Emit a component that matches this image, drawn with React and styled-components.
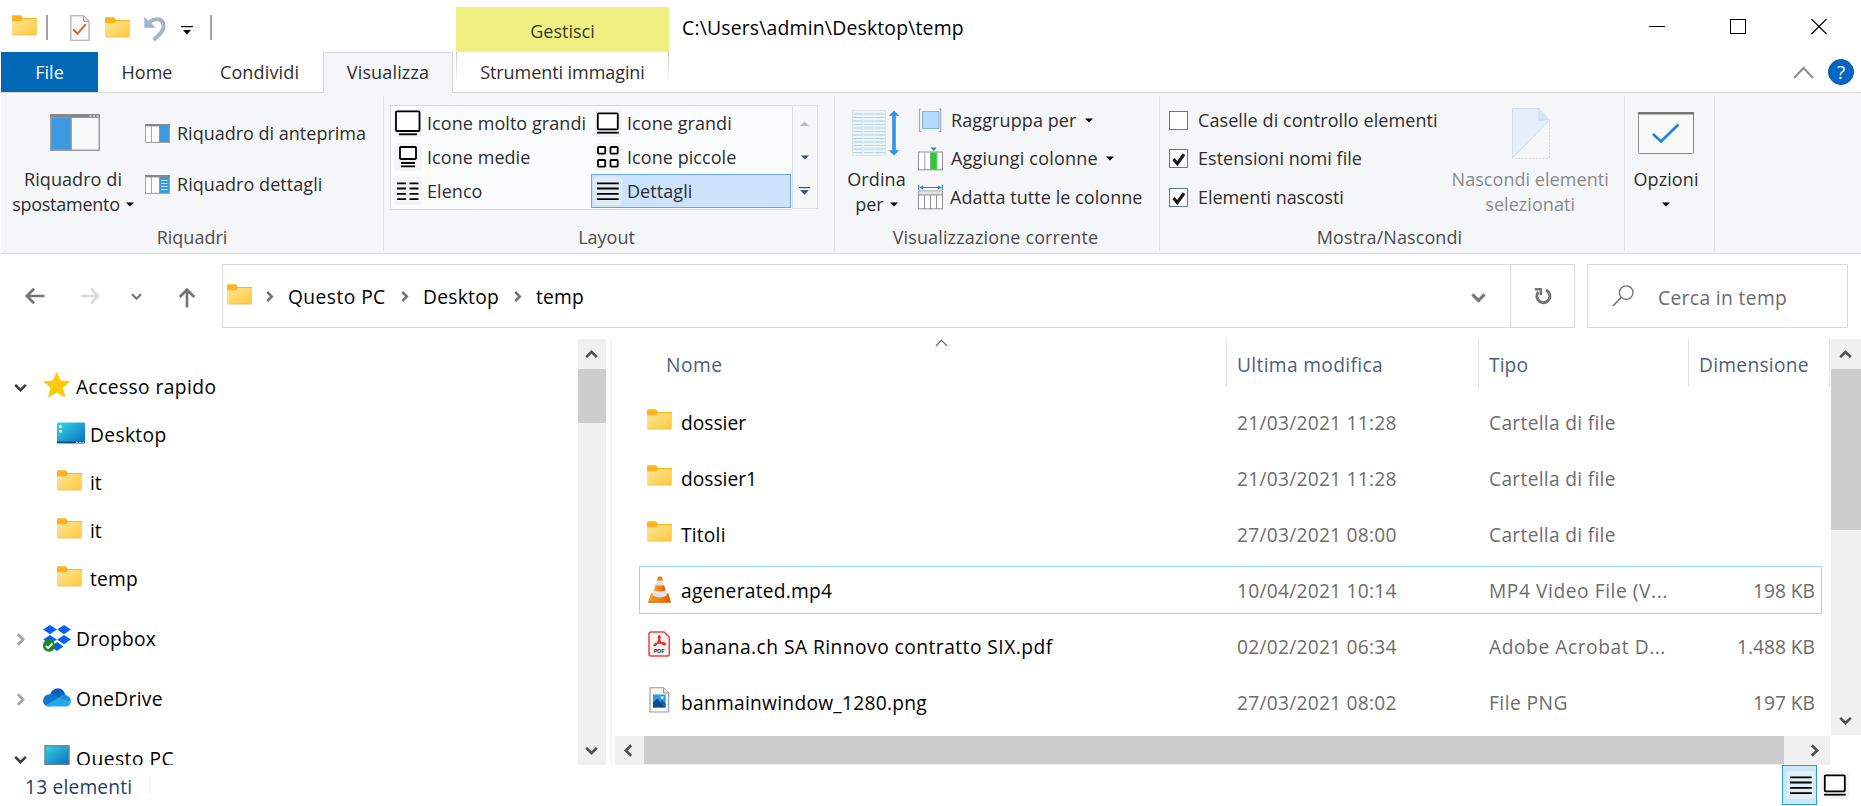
import React from "react";
import styled, { createGlobalStyle } from "styled-components";

const Global = createGlobalStyle`
  * { box-sizing: border-box; }
  body { margin: 0; background: #fff; }
  svg { display: block; flex: none; }
`;

const Window = styled.div`
  width: 1861px;
  height: 806px;
  overflow: hidden;
  display: flex;
  flex-direction: column;
  background: #fff;
  color: #000;
  font: 19.2px/24px "Open Sans", "Noto Sans", sans-serif;
  white-space: nowrap;
`;

/* ---------- title bar ---------- */
const TitleBar = styled.header`
  height: 52px;
  flex: none;
  display: flex;
  align-items: flex-start;
`;
const QuickAccess = styled.div`
  width: 456px;
  padding: 13px 0 0 12px;
  display: flex;
  align-items: flex-start;
`;
const QuickSlot = styled.div`
  width: ${(p) => p.$w}px;
  padding-top: ${(p) => p.$top || 0}px;
`;
const QuickRule = styled.div`
  width: 2px;
  height: 25px;
  margin-top: 2px;
  margin-right: ${(p) => p.$gap || 0}px;
  background: #a3a3a3;
`;
const ContextCaption = styled.div`
  width: 213px;
  height: 45px;
  margin-top: 7px;
  background: #f0f082;
  color: #3a3a2c;
  text-align: center;
  font-size: 18px;
  line-height: 48px;
`;
const WindowTitle = styled.div`
  margin-left: 13px;
  flex: 1;
  line-height: 56px;
  font-size: 19.4px;
  letter-spacing: 0.18px;
`;
const WindowButtons = styled.div`
  display: flex;
  gap: 65px;
  padding: 19px 34px 0 0;
`;

/* ---------- tab strip ---------- */
const TabStrip = styled.nav`
  height: 41px;
  flex: none;
  padding-left: 1px;
  display: flex;
  font-size: 18px;
  line-height: 41px;
  color: #2e2e2e;
  border-bottom: 1px solid #d9dadc;
`;
const Tab = styled.div`
  width: ${(p) => p.$w}px;
  text-align: center;
  letter-spacing: ${(p) => p.$ls || 0}px;
`;
const FileTab = styled(Tab)`
  background: #0069b5;
  color: #fff;
`;
const ActiveTab = styled(Tab)`
  height: 41px;
  background: #f5f6f7;
  border: 1px solid #d9dadc;
  border-bottom: 0;
  line-height: 39px;
`;
const ContextTab = styled(Tab)`
  height: 31px;
  margin-left: 3px;
  border: solid;
  border-width: 0 1px;
  border-image: linear-gradient(#c4c4c4, #fff) 1;
`;
const TabTools = styled.div`
  margin-left: auto;
  display: flex;
  gap: 14px;
  padding-right: 7px;
  height: 40px;
  align-items: center;
`;
const HelpBadge = styled.div`
  width: 26px;
  height: 26px;
  border-radius: 50%;
  background: #0066c6;
  border: 1px solid #0b55a0;
  color: #fff;
  text-align: center;
  font-size: 19px;
  line-height: 24px;
`;

/* ---------- ribbon ---------- */
const Ribbon = styled.section`
  height: 161px;
  flex: none;
  display: flex;
  margin-left: 1px;
  background: #f5f6f7;
  border-bottom: 1px solid #dadbdc;
  font-size: 18px;
  line-height: 25px;
  color: #2e2e2e;
`;
const Group = styled.div`
  width: ${(p) => p.$w}px;
  height: 160px;
  display: flex;
  flex-direction: column;
  border-right: 1px solid transparent;
  border-image: linear-gradient(transparent 4px, #e0e1e3 4px, #e0e1e3 157px, transparent 157px) 1;
`;
const GroupBody = styled.div`
  height: 132px;
  display: flex;
`;
const GroupLabel = styled.div`
  text-align: center;
  color: #4d4d4d;
  padding-right: ${(p) => p.$shift || 0}px;
  letter-spacing: ${(p) => p.$ls || 0}px;
`;
const BigButton = styled.div`
  width: ${(p) => p.$w}px;
  margin-left: ${(p) => p.$left || 0}px;
  padding-top: ${(p) => p.$top || 0}px;
  display: flex;
  flex-direction: column;
  align-items: center;
  color: ${(p) => (p.$off ? "#8a8a8a" : "inherit")};
`;
const BigIcon = styled.div`
  height: ${(p) => p.$h}px;
  margin-left: ${(p) => p.$dx || 0}px;
`;
const Line = styled.div`
  display: flex;
  align-items: center;
  justify-content: center;
  gap: 6px;
  height: 25px;
  letter-spacing: ${(p) => p.$ls || 0}px;
`;
const SmallList = styled.div`
  display: flex;
  flex-direction: column;
  padding: ${(p) => p.$pad};
  gap: ${(p) => p.$gap}px;
`;
const SmallButton = styled.div`
  display: flex;
  align-items: center;
  gap: ${(p) => p.$gap || 7}px;
  height: 28px;
  letter-spacing: ${(p) => p.$ls || 0}px;
`;
const CheckBox = styled.div`
  width: 19px;
  height: 19px;
  border: 1px solid #5a78a8;
  background: #fff;
`;

const Gallery = styled.div`
  margin: 12px 0 0 6px;
  height: 105px;
  display: flex;
`;
const GalleryGrid = styled.div`
  width: 402px;
  height: 105px;
  border: 1px solid #d9dadd;
  border-right: 0;
  background: #fbfcfd;
  display: grid;
  grid-template-columns: 200px 200px;
  grid-auto-rows: 34px;
`;
const GalleryItem = styled.div`
  display: flex;
  align-items: center;
  padding-left: ${(p) => (p.$on ? 2 : 3)}px;
  gap: 5px;
  border: ${(p) => (p.$on ? "1px solid #66a7e8" : "0")};
  background: ${(p) => (p.$on ? "#cde3fb" : "none")};
  letter-spacing: 0.06px;
`;
const IconPlate = styled.div`
  width: 28px;
  height: 28px;
  border-radius: 4px;
  background: ${(p) => p.$bg || "#f3f5f5"};
`;
const GalleryScroll = styled.div`
  width: 26px;
  height: 104px;
  border: 1px solid #dfe0e3;
  background: #f5f6f8;
  display: flex;
  flex-direction: column;
  align-items: center;
`;
const ScrollStep = styled.div`
  height: 34px;
  display: flex;
  align-items: center;
  padding-right: 1px;
`;

/* ---------- navigation row ---------- */
const NavRow = styled.div`
  height: 85px;
  flex: none;
  display: flex;
  padding-top: 10px;
`;
const NavButtons = styled.div`
  width: 222px;
  height: 64px;
  display: flex;
  align-items: center;
`;
const NavSlot = styled.div`
  width: ${(p) => p.$w}px;
  display: flex;
  justify-content: flex-end;
  padding-top: ${(p) => p.$top || 0}px;
`;
const AddressBar = styled.div`
  width: 1353px;
  height: 64px;
  border: 1px solid #d9d9d9;
  display: flex;
  align-items: center;
  padding-left: 4px;
`;
const Crumb = styled.div`
  width: ${(p) => p.$w}px;
  padding-top: 2px;
  letter-spacing: ${(p) => p.$ls || 0}px;
`;
const CrumbIcon = styled.div`
  width: 37px;
  padding-bottom: 4px;
`;
const CrumbArrow = styled.div`
  width: ${(p) => p.$w}px;
  padding-top: 1px;
`;
const AddressDrop = styled.div`
  margin-left: auto;
  padding-right: 24px;
  padding-top: 3px;
`;
const Refresh = styled.div`
  width: 64px;
  height: 62px;
  border-left: 1px solid #d9d9d9;
  display: flex;
  align-items: center;
  justify-content: center;
`;
const SearchBox = styled.div`
  width: 261px;
  height: 64px;
  margin-left: 12px;
  border: 1px solid #d9d9d9;
  display: flex;
  align-items: center;
  padding-left: 24px;
  gap: 24px;
  color: #6a6a6a;
`;
const SearchHint = styled.div`
  padding-top: 4px;
  letter-spacing: 0.38px;
`;

/* ---------- body ---------- */
const Body = styled.main`
  height: 426px;
  flex: none;
  display: flex;
`;
const Sidebar = styled.aside`
  width: 578px;
  height: 426px;
  overflow: hidden;
  padding-top: 24px;
`;
const TreeRow = styled.div`
  height: 48px;
  margin-top: ${(p) => p.$gap || 0}px;
  display: flex;
  align-items: center;
`;
const TreeToggle = styled.div`
  width: 43px;
  padding-left: 14px;
`;
const TreeIcon = styled.div`
  width: ${(p) => (p.$deep ? 47 : 33)}px;
  padding-left: ${(p) => (p.$deep ? 14 : 0)}px;
  padding-bottom: ${(p) => p.$up || 0}px;
`;
const TreeText = styled.div`
  letter-spacing: ${(p) => p.$ls || 0}px;
`;
const VScroll = styled.div`
  width: ${(p) => p.$w}px;
  height: ${(p) => p.$h}px;
  background: #f0f0f0;
  display: flex;
  flex-direction: column;
  align-items: center;
`;
const VThumb = styled.div`
  width: 100%;
  height: ${(p) => p.$h}px;
  margin-bottom: auto;
  background: #cdcdcd;
`;
const VEnd = styled.div`
  height: 30px;
  display: flex;
  align-items: center;
  padding-right: 1px;
`;
const PaneSplit = styled.div`
  width: 2px;
  height: 426px;
  margin: 0 3px 0 4px;
  background: #f4f4f4;
`;
const ListPane = styled.section`
  width: 1246px;
  display: flex;
  flex-direction: column;
`;
const ListUpper = styled.div`
  height: 397px;
  display: flex;
`;
const Table = styled.div`
  width: 1216px;
  height: 397px;
  overflow: hidden;
`;
const HeaderRow = styled.div`
  height: 48px;
  margin-bottom: 11px;
  display: flex;
  color: #4c5f7c;
`;
const HeaderCell = styled.div`
  width: ${(p) => p.$w}px;
  height: 48px;
  padding-left: ${(p) => p.$pad}px;
  border-right: 1px solid #e3e3e3;
  line-height: 52px;
  letter-spacing: ${(p) => p.$ls || 0}px;
  position: relative;
`;
const SortMark = styled.div`
  position: absolute;
  left: 320px;
  top: 0;
`;
const FileRow = styled.div`
  height: 48px;
  width: 1183px;
  margin: 0 0 8px 24px;
  display: flex;
  align-items: center;
  border: 1px solid ${(p) => (p.$focus ? "#99d1ff" : "transparent")};
  padding-left: 7px;
  padding-right: 6px;
`;
const FileIcon = styled.div`
  width: 34px;
  display: flex;
  padding-bottom: ${(p) => p.$up || 0}px;
`;
const NameCell = styled.div`
  width: 556px;
  padding-top: 2px;
  letter-spacing: ${(p) => p.$ls || 0}px;
`;
const MetaCell = styled.div`
  width: ${(p) => p.$w}px;
  padding-top: 2px;
  color: #6d6d6d;
  letter-spacing: ${(p) => p.$ls || 0}px;
`;
const SizeCell = styled(MetaCell)`
  margin-left: auto;
  text-align: right;
`;
const HScroll = styled.div`
  width: 1215px;
  height: 29px;
  background: #f0f0f0;
  display: flex;
  align-items: center;
`;
const HThumb = styled.div`
  width: 1140px;
  height: 28px;
  margin-bottom: 1px;
  background: #cdcdcd;
`;
const HEnd = styled.div`
  width: ${(p) => p.$w}px;
  padding-left: ${(p) => p.$pad}px;
`;

/* ---------- status bar ---------- */
const StatusBar = styled.footer`
  height: 41px;
  flex: none;
  display: flex;
  align-items: flex-start;
  padding-left: 25px;
  color: #24406a;
`;
const StatusCount = styled.div`
  width: 126px;
  height: 18px;
  margin-top: 11px;
  line-height: 22px;
  letter-spacing: 0.18px;
  border-right: 2px solid #f4f4f4;
`;
const ViewSwitch = styled.div`
  margin-left: auto;
  padding-right: 12px;
  display: flex;
  gap: 4px;
`;
const ViewButton = styled.div`
  width: ${(p) => (p.$on ? 35 : 28)}px;
  height: 40px;
  border: ${(p) => (p.$on ? "1px solid #26a0da" : "0")};
  background: ${(p) => (p.$on ? "#cce8f7" : "none")};
  display: flex;
  align-items: center;
  justify-content: center;
  padding-left: ${(p) => (p.$on ? 3 : 0)}px;
`;

/* ---------- drawings ---------- */
const Folder = () => (
  <svg width="25" height="21" viewBox="0 0 25 21">
    <defs>
      <linearGradient id="fold" x1="0" y1="0" x2="1" y2="1">
        <stop offset="0" stopColor="#ffe69a" />
        <stop offset="1" stopColor="#ffc83a" />
      </linearGradient>
    </defs>
    <path d="M0 1.5Q0 .3 1.2.3H9l2 2.7H25V9H0z" fill="#fbb41b" />
    <path d="M0 6.2H8.6Q9.6 6.2 10.4 5L11 4H24.9V19Q24.9 20 24 20H1Q0 20 0 19z" fill="url(#fold)" />
    <path d="M.5 20.2H24.5" stroke="#e3b878" strokeWidth=".7" />
  </svg>
);
const CheckedDoc = () => (
  <svg width="20" height="26" viewBox="0 0 20 26">
    <path d="M.8.8H13.5L19 6.2V25.2H.8z" fill="#fafafa" stroke="#a0a0a0" strokeWidth="1.1" />
    <path d="M13.5.8V6.2H19" fill="#e6e6e6" stroke="#a0a0a0" />
    <path d="M3.4 14.5L7.4 18.8L15.8 9.2" fill="none" stroke="#f05a22" strokeWidth="2" />
  </svg>
);
const Undo = () => (
  <svg width="23" height="26" viewBox="0 0 23 26">
    <path d="M4 8.5C8.5 1.4 18.6 1 19.6 9.5C20.2 15 14.5 20 9.6 24" fill="none" stroke="#a3b4d1" strokeWidth="4" />
    <path d="M.3.8V11.8H11.8L8.6 8.6L4.2 4.6z" fill="#a3b4d1" />
  </svg>
);
const QuickMenu = () => (
  <svg width="12" height="9" viewBox="0 0 12 9">
    <path d="M0 .6H12" stroke="#000" strokeWidth="1.2" />
    <path d="M2 4H10L6 8.5z" />
  </svg>
);
const Down = ({ c = "#000" }) => (
  <svg width="8" height="5" viewBox="0 0 8 5">
    <path d="M0 .4H8L4 4.6z" fill={c} />
  </svg>
);
const Chevron = ({ dir = "down", w = 13, c = "#3d3d3d", s = 2.6 }) => {
  const turn = { down: 0, left: 90, up: 180, right: 270 }[dir];
  return (
    <svg width={w} height={w} viewBox="0 0 13 13">
      <path d="M1.2 3.8L6.5 9.2L11.8 3.8" fill="none" stroke={c} strokeWidth={s} transform={`rotate(${turn} 6.5 6.5)`} />
    </svg>
  );
};
const Minimize = () => (
  <svg width="16" height="16"><path d="M0 7.5H16" stroke="#000" /></svg>
);
const Maximize = () => (
  <svg width="16" height="16"><rect x=".5" y=".5" width="15" height="14" fill="none" stroke="#000" /></svg>
);
const Close = () => (
  <svg width="16" height="16"><path d="M.5 0L15.5 15M15.5 0L.5 15" stroke="#000" strokeWidth="1.1" /></svg>
);
const Collapse = () => (
  <svg width="21" height="13"><path d="M1 12L10.5 2L20 12" fill="none" stroke="#8c8c8c" strokeWidth="2" /></svg>
);
const NavPane = () => (
  <svg width="50" height="37" viewBox="0 0 50 37">
    <rect width="50" height="37" fill="#9b9da0" />
    <rect width="50" height="3.5" fill="#85878a" />
    <path d="M39.5 2H49" stroke="#c8c8c8" strokeWidth="2" strokeDasharray="2 1.5" />
    <rect x="1.5" y="4" width="19" height="31.5" fill="#3e98e0" />
    <rect x="22" y="4" width="26.5" height="31.5" fill="#fafafa" />
  </svg>
);
const SidePane = ({ lines }) => (
  <svg width="25" height="19" viewBox="0 0 25 19">
    <rect width="25" height="19" fill="#a5a7aa" />
    <rect width="25" height="2" fill="#85878a" />
    <rect x="1" y="2.5" width="5" height="15.3" fill="#fff" />
    <rect x="7" y="2.5" width="7" height="15.3" fill="#fff" />
    <rect x="14.5" y="2" width="9.5" height="16" fill="#3e98e0" />
    {lines && <path d="M16 5.5H22.5M16 8.5H22.5M16 11.5H22.5M16 14.5H22.5" stroke="#c5e2fa" />}
  </svg>
);
const glyph = { fill: "none", stroke: "#000", strokeWidth: 1.8 };
const IconXL = () => (
  <svg width="28" height="28"><rect x="2" y="2.3" width="23.5" height="19.7" rx=".8" fill="#fff" stroke="#000" strokeWidth="1.8" /><path d="M5 25.3H23" {...glyph} /></svg>
);
const IconL = () => (
  <svg width="28" height="28"><rect x="3.8" y="4.3" width="20" height="16" rx=".8" fill="#fff" stroke="#000" strokeWidth="1.8" /><path d="M3 23.7H24.7" {...glyph} /></svg>
);
const IconM = () => (
  <svg width="28" height="28"><rect x="6" y="4" width="16" height="12" rx=".8" fill="#fff" stroke="#000" strokeWidth="1.8" /><path d="M7 20H21M7 23.4H21" {...glyph} /></svg>
);
const IconS = () => (
  <svg width="28" height="28">
    {[[4, 4], [16.5, 4], [4, 17], [16.5, 17]].map(([x, y]) => (
      <rect key={`${x}-${y}`} x={x} y={y} width="7.2" height="6.6" rx=".8" fill="#fff" stroke="#000" strokeWidth="1.8" />
    ))}
  </svg>
);
const IconList = () => (
  <svg width="28" height="28"><path d="M3 6.3H12M15.5 6.3H24.5M3 11.5H12M15.5 11.5H24.5M3 16.8H12M15.5 16.8H24.5M3 22.2H12M15.5 22.2H24.5" {...glyph} /></svg>
);
const IconDetails = () => (
  <svg width="28" height="28"><path d="M3 6.3H24.7M3 11.5H24.7M3 16.8H24.7M3 22.2H24.7" {...glyph} /></svg>
);
const SortBig = () => (
  <svg width="48" height="46" viewBox="0 0 48 46">
    <rect x=".5" y=".5" width="33" height="45" fill="#eef5f8" stroke="#dfe3e6" />
    {[4, 7.5, 11, 14.5, 18, 21.5, 25, 28.5, 32, 35.5, 39, 42.5].map((y) => (
      <path key={y} d={`M1 ${y}H33`} stroke="#b4d8e6" strokeWidth="1.2" />
    ))}
    <path d="M11.5 3V44M22.5 3V44" stroke="#e4eff4" strokeWidth="1" />
    <path d="M42 3V43" stroke="#2f93e6" strokeWidth="3.6" />
    <path d="M42 .5L47.2 5.8H36.8zM42 45.5L47.2 40.2H36.8z" fill="#2f93e6" />
  </svg>
);
const GroupBy = () => (
  <svg width="25" height="25" viewBox="0 0 25 25">
    <path d="M3.5 1H1.5V23.5H3.5M20.5 1H22.8V23.5H20.5" fill="none" stroke="#a9abad" strokeWidth="1.2" />
    <rect x="4.5" y="3.5" width="16.5" height="17" fill="#b0dcff" stroke="#7fb3de" />
  </svg>
);
const AddColumns = () => (
  <svg width="25" height="25" viewBox="0 0 25 25">
    <rect x=".5" y="6" width="24" height="17.8" fill="#fff" stroke="#8d8f92" />
    <path d="M6.8 6V24M12.5 6V24M19 6V24" stroke="#a0a2a5" />
    <rect x="12.7" y="6.5" width="6" height="17" fill="#27cf2c" />
    <path d="M12.7 1.5H18.7L15.7 5z" fill="#2e7fc6" />
  </svg>
);
const FitColumns = () => (
  <svg width="25" height="25" viewBox="0 0 25 25">
    <path d="M.7 0V5M24.3 0V5M3 2.5H22" stroke="#3a80bd" strokeWidth="1.2" />
    <path d="M1.5 2.5L5 .2V4.8zM23.5 2.5L20 .2V4.8z" fill="#2e7fc6" />
    <rect x=".5" y="6" width="24" height="17.8" fill="#fff" stroke="#8d8f92" />
    <rect x="1" y="6.5" width="23" height="3.5" fill="#e0e0e0" />
    <path d="M.5 10H24.5M6.5 10V24M12.5 10V24M18.5 10V24" stroke="#8d8f92" />
  </svg>
);
const Tick = () => (
  <svg width="17" height="17"><path d="M3.5 9L7.3 13.6L14 4.3" fill="none" stroke="#1c1c1c" strokeWidth="3.2" /></svg>
);
const HiddenDoc = () => (
  <svg width="38" height="51" viewBox="0 0 38 51">
    <path d="M.6.6H27L37.4 12L.6 50z" fill="#e6eefa" stroke="#cdd9ea" />
    <path d="M27 .6V12H37.4" fill="#dbe5f1" stroke="#cdd9ea" />
    <path d="M37.4 13V50.4H1" fill="none" stroke="#d3d5d8" strokeDasharray="2 1.5" />
  </svg>
);
const OptionsIcon = () => (
  <svg width="56" height="42" viewBox="0 0 56 42">
    <rect x=".5" y=".5" width="55" height="41" rx="1" fill="#fafafa" stroke="#8a8a88" />
    <rect width="56" height="2.5" fill="#777773" />
    <path d="M15 22L23 29.5L40.5 12.5" fill="none" stroke="#1486dc" strokeWidth="2.6" />
  </svg>
);
const Arrow = ({ dir, c }) => (
  <svg width="20" height="20" viewBox="0 0 20 20">
    <path d="M19.5 10H2M9 2.7L1.8 10L9 17.3" fill="none" stroke={c} strokeWidth="2.7" transform={`rotate(${{ left: 0, up: 90, right: 180 }[dir]} 10 10)`} />
  </svg>
);
const RefreshIcon = () => (
  <svg width="18" height="18" viewBox="0 0 18 18">
    <path d="M12 3.2A6.5 6.5 0 1 1 4.4 5" fill="none" stroke="#757575" strokeWidth="3" />
    <path d="M.8 1H8V8.2L5.6 8V3.6H.8z" fill="#757575" />
  </svg>
);
const Magnifier = () => (
  <svg width="22" height="22" viewBox="0 0 22 22">
    <circle cx="14.2" cy="7.6" r="6.8" fill="none" stroke="#6e6e6e" strokeWidth="1.3" />
    <path d="M9.5 12.3L.8 21" stroke="#6e6e6e" strokeWidth="1.5" />
  </svg>
);
const Star = () => (
  <svg width="28" height="26" viewBox="0 0 28 26">
    <path d="M13.7.5L17.2 9L26.3 9.7L19.5 15.6L21.7 24.8L13.7 20.2L5.7 24.8L7.9 15.6L1.1 9.7L10.2 9z" fill="#ffc80a" stroke="#ffc80a" strokeLinejoin="round" />
  </svg>
);
const DesktopIcon = () => (
  <svg width="28" height="22" viewBox="0 0 28 22">
    <defs>
      <linearGradient id="desk" x1="0" y1="0" x2="1" y2="1">
        <stop offset="0" stopColor="#37d6e0" />
        <stop offset="1" stopColor="#0b6cc4" />
      </linearGradient>
    </defs>
    <rect y=".5" width="28" height="21" rx="1" fill="url(#desk)" />
    <path d="M0 20.3H28" stroke="#0a4f86" strokeWidth="1.6" />
    <path d="M2 3.5H5V6H2zM2 8H5V10.5H2z" fill="#e9ffff" />
    <path d="M19 20.4H27" stroke="#fff" strokeDasharray="2 1.2" />
  </svg>
);
const DropboxIcon = () => (
  <svg width="28" height="27" viewBox="0 0 28 27">
    <g fill="#0061fe">
      <path d="M7 0L13.8 4.6L7 9.2L.2 4.6zM21 0L27.8 4.6L21 9.2L14.2 4.6zM7 10L13.8 14.6L7 19.2L.2 14.6zM21 10L27.8 14.6L21 19.2L14.2 14.6zM14 17L20.5 21.4L14 26L7.5 21.4z" />
    </g>
    <circle cx="6" cy="20.7" r="6.1" fill="#178a1c" />
    <path d="M2.8 20.8L5.2 23.2L9.5 18.4" fill="none" stroke="#fff" strokeWidth="1.9" />
  </svg>
);
const OneDriveIcon = () => (
  <svg width="28" height="19" viewBox="0 0 28 19">
    <path d="M7 7Q9 .3 15 .3Q20.5.5 22.5 7L16 13z" fill="#0762b4" />
    <path d="M6 18.5Q0 18 0 12.5Q.5 6.5 7 6.2Q11 6 17 10.5L8 18z" fill="#0f78d2" />
    <path d="M15.5 9.5Q20 5.5 23 7Q27.5 8.5 28 13.5L20 14z" fill="#1490df" />
    <path d="M3 17L15.8 9.5L27.8 14Q27 18.4 23.5 18.5H6Q4 18.5 3 17z" fill="#28a8ea" />
  </svg>
);
const PcIcon = () => (
  <svg width="28" height="24" viewBox="0 0 28 24">
    <rect x="2" y=".8" width="24" height="18.5" fill="url(#desk)" stroke="#69808d" strokeWidth="1.4" />
    <path d="M11 20.5H17M8 23H20" stroke="#7b8b96" strokeWidth="1.5" />
  </svg>
);
const ConeIcon = () => (
  <svg width="25" height="27" viewBox="0 0 25 27">
    <defs>
      <linearGradient id="cone" x1="0" x2="1">
        <stop offset="0" stopColor="#f79a2c" />
        <stop offset=".6" stopColor="#f07c0c" />
        <stop offset="1" stopColor="#c85f00" />
      </linearGradient>
    </defs>
    <path d="M4 17.5H21.5L24 26.5H1z" fill="url(#cone)" />
    <path d="M1 25.5H24V26.6H1z" fill="#cf6a04" />
    <path d="M10.8 1H14.8L20 19.5Q12.7 23.5 5.6 19.5z" fill="#dfe1e3" />
    <path d="M10.8 1Q12.8 -.4 14.8 1L15.8 4.6H9.8zM8.4 9.5H17.2L18.6 14.6Q12.8 16.6 7 14.6z" fill="url(#cone)" />
  </svg>
);
const PdfLabel = styled.text`
  font: bold 5.5px "Liberation Sans", sans-serif;
`;
const PdfIcon = () => (
  <svg width="25" height="26" viewBox="0 0 25 26">
    <path d="M4 .9H17L22.3 6V23Q22.3 25 20.3 25H4Q2 25 2 23V3Q2 .9 4 .9z" fill="#f9f5f5" stroke="#e8453c" strokeWidth="1.5" />
    <path d="M12 8.2C10.2 4.4 13.8 4 12.9 7C12 10.5 10.4 12.6 9 13.8C6.8 15.8 6 13.6 8.8 12.7C12 11.7 14.5 11.5 17 11.9C19.4 12.5 18 14.6 15.8 13.2C14 11.8 12.8 10 12 8.2" fill="none" stroke="#ee2a2a" strokeWidth="1.5" />
    <PdfLabel x="6.7" y="21.6" fill="#333">PDF</PdfLabel>
  </svg>
);
const PngIcon = () => (
  <svg width="25" height="26" viewBox="0 0 25 26">
    <path d="M3 .8H16.5L21.6 6V25H3z" fill="#f8f8f8" stroke="#969899" strokeWidth="1.1" />
    <path d="M16.5.8V6H21.6" fill="#e8e8e8" stroke="#969899" />
    <rect x="6" y="7.5" width="12.6" height="13" fill="#2b9be8" />
    <path d="M6 15.5L10.2 11.5L18.6 20.5H6z" fill="#0c4a8c" />
    <path d="M13 15L15 13L18.6 17V20.5z" fill="#14639f" />
    <circle cx="15.3" cy="10.5" r="1.5" fill="#e4f4ff" />
  </svg>
);

const galleryItems = [
  ["Icone molto grandi", IconXL],
  ["Icone grandi", IconL],
  ["Icone medie", IconM],
  ["Icone piccole", IconS],
  ["Elenco", IconList],
  ["Dettagli", IconDetails],
];
const optionsList = [
  ["Caselle di controllo elementi", false, 0.08],
  ["Estensioni nomi file", true, 0.03],
  ["Elementi nascosti", true, -0.05],
];
const files = [
  { name: "dossier", ls: 0, date: "21/03/2021 11:28", type: "Cartella di file", tls: 0.3, Icon: Folder, up: 5 },
  { name: "dossier1", ls: 0, date: "21/03/2021 11:28", type: "Cartella di file", tls: 0.3, Icon: Folder, up: 5 },
  { name: "Titoli", ls: 0.2, date: "27/03/2021 08:00", type: "Cartella di file", tls: 0.3, Icon: Folder, up: 5 },
  { name: "agenerated.mp4", ls: 0.25, date: "10/04/2021 10:14", type: "MP4 Video File (V...", tls: 0.56, size: "198 KB", Icon: ConeIcon, up: 2, focus: true },
  { name: "banana.ch SA Rinnovo contratto SIX.pdf", ls: 0.47, date: "02/02/2021 06:34", type: "Adobe Acrobat D...", tls: 0.56, size: "1.488 KB", Icon: PdfIcon, up: 4 },
  { name: "banmainwindow_1280.png", ls: 0.27, date: "27/03/2021 08:02", type: "File PNG", tls: 0.45, size: "197 KB", Icon: PngIcon, up: 4 },
];
const tree = [
  { text: "Accesso rapido", ls: 0.42, Icon: Star, toggle: "down", up: 4 },
  { text: "Desktop", ls: 0.35, Icon: DesktopIcon, deep: true, up: 4 },
  { text: "it", Icon: Folder, deep: true, up: 6 },
  { text: "it", Icon: Folder, deep: true, up: 6 },
  { text: "temp", ls: 0.2, Icon: Folder, deep: true, up: 6 },
  { text: "Dropbox", ls: 0.25, Icon: DropboxIcon, toggle: "right", gap: 12, up: 2 },
  { text: "OneDrive", ls: 0.3, Icon: OneDriveIcon, toggle: "right", gap: 12, up: 3 },
  { text: "Questo PC", ls: 0.5, Icon: PcIcon, toggle: "down", gap: 12, up: 4 },
];

export default function App() {
  return (
    <Window>
      <Global />
      <TitleBar>
        <QuickAccess>
          <QuickSlot $w={34} $top={2}><Folder /></QuickSlot>
          <QuickRule $gap={22} />
          <QuickSlot $w={35} $top={2}><CheckedDoc /></QuickSlot>
          <QuickSlot $w={39} $top={4}><Folder /></QuickSlot>
          <QuickSlot $w={37} $top={3}><Undo /></QuickSlot>
          <QuickSlot $w={29} $top={13}><QuickMenu /></QuickSlot>
          <QuickRule />
        </QuickAccess>
        <ContextCaption>Gestisci</ContextCaption>
        <WindowTitle>C:\Users\admin\Desktop\temp</WindowTitle>
        <WindowButtons>
          <Minimize />
          <Maximize />
          <Close />
        </WindowButtons>
      </TitleBar>

      <TabStrip>
        <FileTab $w={97}>File</FileTab>
        <Tab $w={98}>Home</Tab>
        <Tab $w={127} $ls={0.15}>Condividi</Tab>
        <ActiveTab $w={130} $ls={0.15}>Visualizza</ActiveTab>
        <ContextTab $w={213} $ls={-0.07}>Strumenti immagini</ContextTab>
        <TabTools>
          <Collapse />
          <HelpBadge>?</HelpBadge>
        </TabTools>
      </TabStrip>

      <Ribbon>
        <Group $w={383}>
          <GroupBody>
            <BigButton $w={144} $top={21}>
              <BigIcon $h={53} $dx={4}><NavPane /></BigIcon>
              <Line $ls={0.08}>Riquadro di</Line>
              <Line $ls={-0.25}>spostamento <Down /></Line>
            </BigButton>
            <SmallList $pad="26px 0 0" $gap={23}>
              <SmallButton><SidePane />Riquadro di anteprima</SmallButton>
              <SmallButton $ls={0.06}><SidePane lines />Riquadro dettagli</SmallButton>
            </SmallList>
          </GroupBody>
          <GroupLabel>Riquadri</GroupLabel>
        </Group>

        <Group $w={451}>
          <GroupBody>
            <Gallery>
              <GalleryGrid>
                {galleryItems.map(([text, Icon], i) => (
                  <GalleryItem key={text} $on={i === 5}>
                    <IconPlate $bg={i === 5 ? "#e0ebf4" : undefined}><Icon /></IconPlate>
                    {text}
                  </GalleryItem>
                ))}
              </GalleryGrid>
              <GalleryScroll>
                <ScrollStep>
                  <svg width="9" height="5"><path d="M0 5H9L4.5 .5z" fill="#b3bac4" /></svg>
                </ScrollStep>
                <ScrollStep><Down c="#3d5272" /></ScrollStep>
                <ScrollStep>
                  <svg width="11" height="8"><path d="M0 .6H11" stroke="#3d5272" strokeWidth="1.2" /><path d="M1.2 3H9.8L5.5 7.8z" fill="#3d5272" /></svg>
                </ScrollStep>
              </GalleryScroll>
            </Gallery>
          </GroupBody>
          <GroupLabel $shift={5}>Layout</GroupLabel>
        </Group>

        <Group $w={325}>
          <GroupBody>
            <BigButton $w={83} $top={17}>
              <BigIcon $h={57} $dx={-2}><SortBig /></BigIcon>
              <Line $ls={0.1}>Ordina</Line>
              <Line>per <Down /></Line>
            </BigButton>
            <SmallList $pad="13px 0 0" $gap={10.5}>
              <SmallButton $gap={8} $ls={0.1}>
                <GroupBy />Raggruppa per <Down />
              </SmallButton>
              <SmallButton $gap={8} $ls={0.2}>
                <AddColumns />Aggiungi colonne <Down />
              </SmallButton>
              <SmallButton $ls={0.05}>
                <FitColumns />Adatta tutte le colonne
              </SmallButton>
            </SmallList>
          </GroupBody>
          <GroupLabel $ls={0.14} $shift={3}>Visualizzazione corrente</GroupLabel>
        </Group>

        <Group $w={465}>
          <GroupBody>
            <SmallList $pad="13px 0 0 9px" $gap={10.5}>
              {optionsList.map(([text, on, ls]) => (
                <SmallButton key={text} $gap={10} $ls={ls}>
                  <CheckBox>{on && <Tick />}</CheckBox>
                  {text}
                </SmallButton>
              ))}
            </SmallList>
            <BigButton $w={181} $top={15} $left={2} $off>
              <BigIcon $h={59} $dx={2}><HiddenDoc /></BigIcon>
              <Line $ls={0.05}>Nascondi elementi</Line>
              <Line $ls={0.05}>selezionati</Line>
            </BigButton>
          </GroupBody>
          <GroupLabel $ls={0.08} $shift={5}>Mostra/Nascondi</GroupLabel>
        </Group>

        <Group $w={90}>
          <GroupBody>
            <BigButton $w={82} $top={19}>
              <BigIcon $h={55}><OptionsIcon /></BigIcon>
              <Line $ls={0.1}>Opzioni</Line>
              <Line><Down /></Line>
            </BigButton>
          </GroupBody>
        </Group>
      </Ribbon>

      <NavRow>
        <NavButtons>
          <NavSlot $w={45}><Arrow dir="left" c="#757575" /></NavSlot>
          <NavSlot $w={55}><Arrow dir="right" c="#dcdcdc" /></NavSlot>
          <NavSlot $w={42}><Chevron w={11} c="#757575" /></NavSlot>
          <NavSlot $w={55} $top={3}><Arrow dir="up" c="#757575" /></NavSlot>
        </NavButtons>
        <AddressBar>
          <CrumbIcon><Folder /></CrumbIcon>
          <CrumbArrow $w={24}><Chevron dir="right" c="#757575" w={11} s={3} /></CrumbArrow>
          <Crumb $w={111} $ls={0.45}>Questo PC</Crumb>
          <CrumbArrow $w={24}><Chevron dir="right" c="#757575" w={11} s={3} /></CrumbArrow>
          <Crumb $w={89} $ls={0.3}>Desktop</Crumb>
          <CrumbArrow $w={24}><Chevron dir="right" c="#757575" w={11} s={3} /></CrumbArrow>
          <Crumb $w={60} $ls={0.2}>temp</Crumb>
          <AddressDrop><Chevron c="#757575" w={15} /></AddressDrop>
          <Refresh><RefreshIcon /></Refresh>
        </AddressBar>
        <SearchBox><Magnifier /><SearchHint>Cerca in temp</SearchHint></SearchBox>
      </NavRow>

      <Body>
        <Sidebar>
          {tree.map((n, i) => (
            <TreeRow key={i} $gap={n.gap}>
              <TreeToggle>
                {n.toggle && <Chevron dir={n.toggle} c={n.toggle === "down" ? "#3d3d3d" : "#a3a3a3"} />}
              </TreeToggle>
              <TreeIcon $deep={n.deep} $up={n.up}><n.Icon /></TreeIcon>
              <TreeText $ls={n.ls}>{n.text}</TreeText>
            </TreeRow>
          ))}
        </Sidebar>
        <VScroll $w={28} $h={426}>
          <VEnd><Chevron dir="up" c="#505050" /></VEnd>
          <VThumb $h={54} />
          <VEnd><Chevron c="#505050" /></VEnd>
        </VScroll>
        <PaneSplit />
        <ListPane>
          <ListUpper>
            <Table>
              <HeaderRow>
                <HeaderCell $w={612} $pad={51} $ls={0.5}>
                  Nome
                  <SortMark>
                    <svg width="13" height="8"><path d="M.8 7L6.5 1.3L12.2 7" fill="none" stroke="#6b6b6b" strokeWidth="1.1" /></svg>
                  </SortMark>
                </HeaderCell>
                <HeaderCell $w={252} $pad={10} $ls={0.33}>Ultima modifica</HeaderCell>
                <HeaderCell $w={210} $pad={10} $ls={0.1}>Tipo</HeaderCell>
                <HeaderCell $w={141} $pad={10} $ls={0.27}>Dimensione</HeaderCell>
              </HeaderRow>
              {files.map((f) => (
                <FileRow key={f.name} $focus={f.focus}>
                  <FileIcon $up={f.up}><f.Icon /></FileIcon>
                  <NameCell $ls={f.ls}>{f.name}</NameCell>
                  <MetaCell $w={252} $ls={0.25}>{f.date}</MetaCell>
                  <MetaCell $w={200} $ls={f.tls}>{f.type}</MetaCell>
                  <SizeCell $w={110}>{f.size}</SizeCell>
                </FileRow>
              ))}
            </Table>
            <VScroll $w={30} $h={396}>
              <VEnd><Chevron dir="up" c="#505050" /></VEnd>
              <VThumb $h={161} />
              <VEnd><Chevron c="#505050" /></VEnd>
            </VScroll>
          </ListUpper>
          <HScroll>
            <HEnd $w={29} $pad={7}><Chevron dir="left" c="#505050" /></HEnd>
            <HThumb />
            <HEnd $w={46} $pad={24}><Chevron dir="right" c="#505050" /></HEnd>
          </HScroll>
        </ListPane>
      </Body>

      <StatusBar>
        <StatusCount>13 elementi</StatusCount>
        <ViewSwitch>
          <ViewButton $on><IconPlate $bg="#e0eff5"><IconDetails /></IconPlate></ViewButton>
          <ViewButton><IconPlate $bg="#f4f4f4"><IconL /></IconPlate></ViewButton>
        </ViewSwitch>
      </StatusBar>
    </Window>
  );
}
